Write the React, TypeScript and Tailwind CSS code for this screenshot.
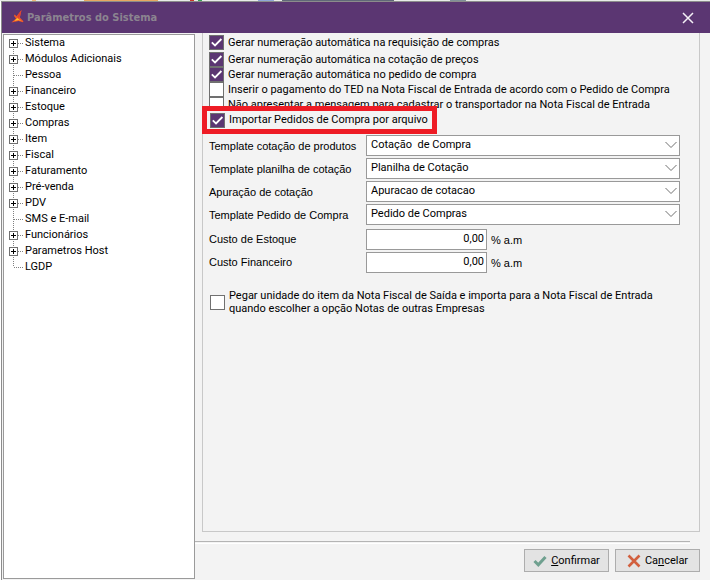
import { useState } from "react";

interface TreeItem {
  label: string;
  leaf?: boolean;
}

interface Option {
  id: string;
  label: string;
  checked: boolean;
}

const TREE: TreeItem[] = [
  { label: "Sistema" },
  { label: "Módulos Adicionais" },
  { label: "Pessoa", leaf: true },
  { label: "Financeiro" },
  { label: "Estoque" },
  { label: "Compras" },
  { label: "Item" },
  { label: "Fiscal" },
  { label: "Faturamento" },
  { label: "Pré-venda" },
  { label: "PDV" },
  { label: "SMS e E-mail", leaf: true },
  { label: "Funcionários" },
  { label: "Parametros Host" },
  { label: "LGDP", leaf: true },
];

const OPTIONS: Option[] = [
  { id: "cotacao", label: "Gerar numeração automática na cotação de preços", checked: true },
  { id: "pedido", label: "Gerar numeração automática no pedido de compra", checked: true },
  { id: "ted", label: "Inserir o pagamento do TED na Nota Fiscal de Entrada de acordo com o Pedido de Compra", checked: false },
  { id: "transportador", label: "Não apresentar a mensagem para cadastrar o transportador na Nota Fiscal de Entrada", checked: false },
];

const TEMPLATES = [
  { id: "tpl-produtos", label: "Template cotação de produtos", value: "Cotação\u00a0 de Compra" },
  { id: "tpl-planilha", label: "Template planilha de cotação", value: "Planilha de Cotação" },
  { id: "tpl-apuracao", label: "Apuração de cotação", value: "Apuracao de cotacao" },
  { id: "tpl-pedido", label: "Template Pedido de Compra", value: "Pedido de Compras" },
];

const COSTS = [
  { id: "custo-estoque", label: "Custo de Estoque" },
  { id: "custo-financeiro", label: "Custo Financeiro" },
];

function CheckBox({ id, initial }: { id: string; initial: boolean }) {
  const [checked, setChecked] = useState(initial);

  return (
    <span className="grid shrink-0">
      <input
        id={id}
        type="checkbox"
        checked={checked}
        onChange={(e) => setChecked(e.target.checked)}
        className="col-start-1 row-start-1 w-[15px] h-[15px] appearance-none border border-[#707070] bg-white checked:bg-[#5b3672]"
      />
      {checked && (
        <svg className="col-start-1 row-start-1 w-[15px] h-[15px] pointer-events-none" viewBox="0 0 15 15" fill="none" stroke="#fff" strokeWidth="1.8">
          <path d="M2.8 7.4L6 10.4L12.4 4" />
        </svg>
      )}
    </span>
  );
}

function TreeRow({ item, first, last }: { item: TreeItem; first: boolean; last: boolean }) {
  return (
    <li className="flex items-center h-4">
      <svg className="w-5 h-4 shrink-0" viewBox="0 0 20 16" fill="none" shapeRendering="crispEdges">
        <path d={first ? "M9.5 8V16" : last ? "M9.5 0V8" : "M9.5 0V16"} stroke="#808080" strokeDasharray="1 1" />
        <path d="M10 8.5H19" stroke="#808080" strokeDasharray="1 1" />
        {!item.leaf && (
          <>
            <rect x="5.5" y="4.5" width="8" height="8" fill="#fff" stroke="#707070" />
            <path d="M7 8.5H12M9.5 6V11" stroke="#000" />
          </>
        )}
      </svg>
      <button type="button" className="ml-px whitespace-nowrap">{item.label}</button>
    </li>
  );
}

export default function App() {
  return (
    <div className="h-screen min-h-[420px] flex flex-col bg-white pb-2 font-['Roboto','Liberation_Sans',sans-serif] text-[11px] leading-4 text-black">
      {/* Sliver of the window behind the dialog */}
      <div className="h-px shrink-0 flex bg-[#e8ebe8]">
        <span className="w-1 ml-8 bg-[#f0b878]" />
        <span className="w-[74px] ml-12 bg-[#e8a860]" />
        <span className="w-1 ml-8 bg-[#c83828]" />
        <span className="w-1 ml-1 bg-[#38a058]" />
        <span className="w-4 ml-14 bg-[#90a8d8]" />
        <span className="w-28 ml-2 bg-[#606878]" />
        <span className="w-4 ml-14 bg-[#809098]" />
      </div>

      <div className="flex-1 min-h-0 flex flex-col ml-px border-l border-t border-[#8c8c8c] bg-[#f3f3f3]">
        <header className="h-[31px] shrink-0 flex items-center bg-[#5b3672] pl-2 pr-4">
          <svg className="w-4 h-4" viewBox="0 0 16 16">
            <path d="M11.5 0L6.6 6.2L4.6 4.6L4 6L6 8.6L1.4 12.4L8.6 11L13 12.2L13.4 11.2L9.8 7.6Z" fill="#f05a28" />
            <path d="M11.5 0L7 6L8.2 8.2L10 6.4Z" fill="#e04030" />
            <path d="M7.2 8L11.6 11.2L8.6 10L4.4 11Z" fill="#ffc02c" />
          </svg>
          <h1 className="ml-px flex-1 font-['DejaVu_Sans_Condensed','DejaVu_Sans',sans-serif] text-[11px] font-bold text-[#8b8490]">Parâmetros do Sistema</h1>
          <button type="button" aria-label="Fechar">
            <svg className="w-3 h-3" viewBox="0 0 12 12" stroke="#f4f0f6" strokeWidth="1.5">
              <path d="M1 1L11 11M11 1L1 11" />
            </svg>
          </button>
        </header>

        <div className="flex-1 min-h-0 flex">
          <nav className="w-[192px] shrink-0 mt-px ml-px mb-px border border-[#9a9a9a] bg-white overflow-hidden">
            <ul>
              {TREE.map((item, i) => (
                <TreeRow key={item.label} item={item} first={i === 0} last={i === TREE.length - 1} />
              ))}
            </ul>
          </nav>

          <main className="flex-1 min-w-0 flex flex-col">
            <section className="flex-1 min-h-0 ml-[7px] mr-2.5 border border-t-0 border-[#c8c8c8] pt-0.5">
              <div className="flex items-center h-[15px] pl-1.5 mb-0.5">
                <CheckBox id="requisicao" initial />
                <label htmlFor="requisicao" className="ml-1 whitespace-nowrap">Gerar numeração automática na requisição de compras</label>
              </div>
              {OPTIONS.map((opt) => (
                <div key={opt.id} className="flex items-center h-[15px] pl-1.5">
                  <CheckBox id={opt.id} initial={opt.checked} />
                  <label htmlFor={opt.id} className="ml-1 whitespace-nowrap">{opt.label}</label>
                </div>
              ))}

              {/* Highlighted option */}
              <div className="relative w-[235px] h-7 -ml-px -mt-1.5 pl-[3px] flex items-center border-5 border-[#ee1c25] bg-[#f3f3f3]">
                <CheckBox id="importar" initial />
                <label htmlFor="importar" className="ml-1 whitespace-nowrap">Importar Pedidos de Compra por arquivo</label>
              </div>

              <div className="mt-px pl-1.5 pr-[19px] flex flex-col gap-0.5">
                {TEMPLATES.map((tpl) => (
                  <div key={tpl.id} className="flex items-center h-[21px]">
                    <label htmlFor={tpl.id} className="w-[157px] shrink-0 font-['Liberation_Sans',sans-serif]">{tpl.label}</label>
                    <div className="relative flex-1 h-full">
                      <select id={tpl.id} className="w-full h-full appearance-none border border-[#999] bg-white pl-1 pb-0.5">
                        <option>{tpl.value}</option>
                      </select>
                      <svg className="absolute right-[3px] top-[6px] w-3 h-2 pointer-events-none" viewBox="0 0 12 8" fill="none" stroke="#707070">
                        <path d="M0.5 1L6 6.5L11.5 1" />
                      </svg>
                    </div>
                  </div>
                ))}
              </div>

              <div className="mt-1 pl-1.5 flex flex-col gap-0.5">
                {COSTS.map((cost) => (
                  <div key={cost.id} className="flex items-center h-[21px]">
                    <label htmlFor={cost.id} className="w-[157px] shrink-0 pb-0.5 font-['Liberation_Sans',sans-serif]">{cost.label}</label>
                    <input id={cost.id} type="text" defaultValue="0,00" className="w-[121px] h-full border border-[#999] bg-white pr-0.5 pb-0.5 text-right" />
                    <span className="ml-1 font-['Liberation_Sans',sans-serif]">% a.m</span>
                  </div>
                ))}
              </div>

              <div className="mt-4 pl-[7px] flex items-center">
                <CheckBox id="unidade" initial={false} />
                <label htmlFor="unidade" className="ml-1 leading-[13px]">
                  Pegar unidade do item da Nota Fiscal de Saída e importa para a Nota Fiscal de Entrada
                  <br />
                  quando escolher a opção Notas de outras Empresas
                </label>
              </div>
            </section>

            <hr className="mt-[9px] mr-5 h-[3px] border-0 border-t border-b border-t-[#b4b4b4] border-b-white" />

            <footer className="flex justify-end gap-1.5 mt-[5px] mr-2.5 mb-2">
              <button type="button" className="w-[85px] h-[23px] flex items-center justify-center gap-1 border border-[#adadad] bg-[#e3e3e3]">
                <svg className="w-3.5 h-3.5" viewBox="0 0 14 14" fill="none" stroke="#6fa08f" strokeWidth="3">
                  <path d="M1.5 7L5.3 10.8L12.5 3" />
                </svg>
                <span><u>C</u>onfirmar</span>
              </button>
              <button type="button" className="w-[85px] h-[23px] flex items-center justify-center gap-1 border border-[#adadad] bg-[#e3e3e3]">
                <svg className="w-3.5 h-3.5" viewBox="0 0 14 14" fill="none" stroke="#d2603f" strokeWidth="2.6">
                  <path d="M1.5 1.5L12.5 12.5M12.5 1.5L1.5 12.5" />
                </svg>
                <span>Ca<u>n</u>celar</span>
              </button>
            </footer>
          </main>
        </div>
      </div>
    </div>
  );
}
